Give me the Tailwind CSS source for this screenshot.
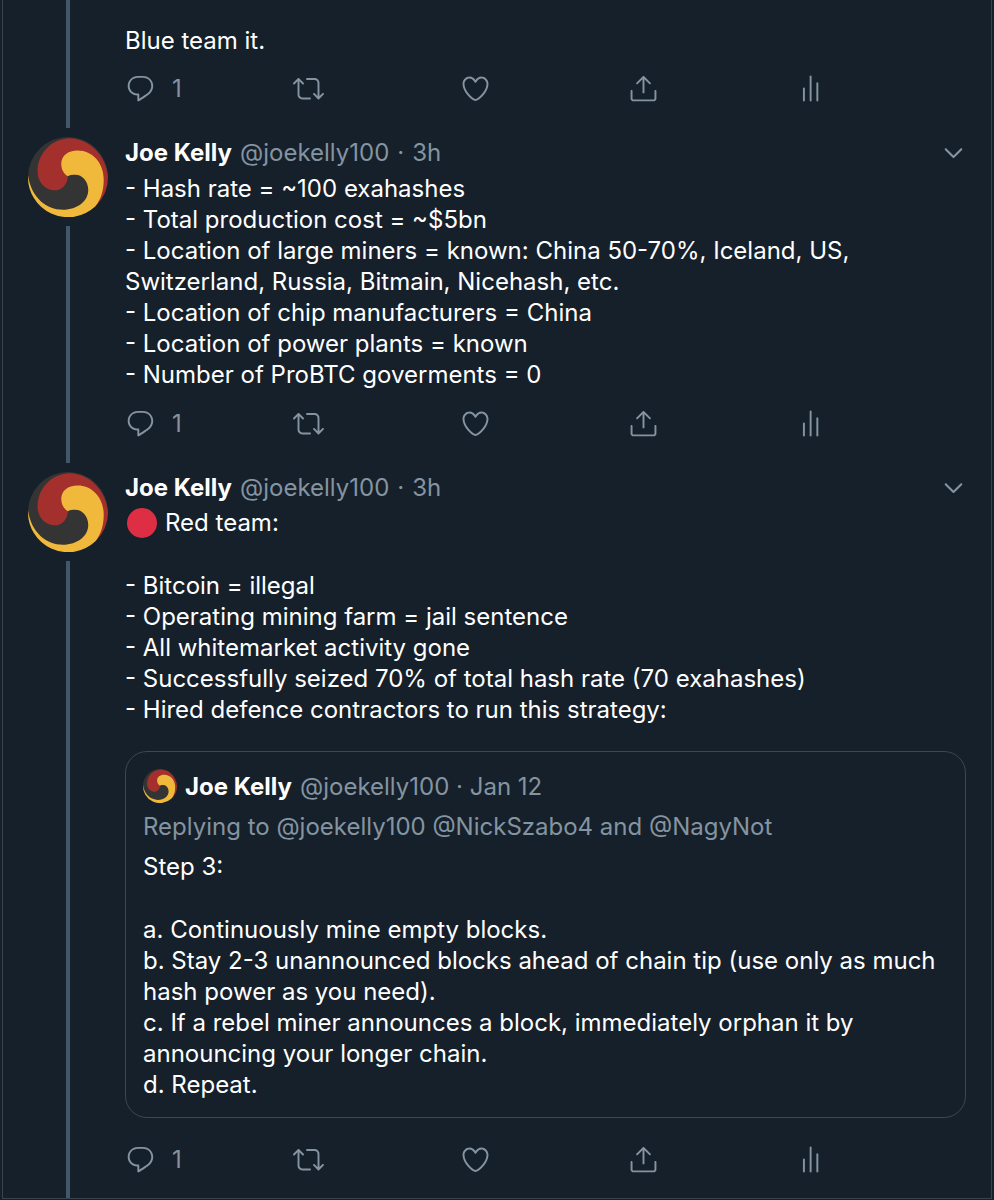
<!DOCTYPE html>
<html lang="en">

<head>
    <meta charset="UTF-8">
    <meta name="viewport" content="width=device-width, initial-scale=1.0">
    <title>Joe Kelly - Thread</title>
    <script src="https://cdn.jsdelivr.net/npm/@tailwindcss/browser@4"></script>
</head>

<body class="bg-[#16202a] text-white font-['Inter',sans-serif] text-[24px] leading-[31px]">
    <!-- Shared icons -->
    <svg class="hidden" aria-hidden="true">
        <symbol id="reply" viewBox="0 0 24 24">
            <path d="M14.046 2.242l-4.148-.01h-.002c-4.374 0-7.8 3.427-7.8 7.802 0 4.098 3.186 7.206 7.465 7.37v3.828c0 .108.044.286.12.403.142.225.384.347.632.347.138 0 .277-.038.402-.118.264-.168 6.473-4.14 8.088-5.506 1.902-1.61 3.04-3.97 3.043-6.312v-.017c-.006-4.367-3.43-7.787-7.8-7.788zm3.787 12.972c-1.134.96-4.862 3.405-6.772 4.643V16.67c0-.414-.335-.75-.75-.75h-.396c-3.66 0-6.318-2.476-6.318-5.886 0-3.534 2.768-6.302 6.3-6.302l4.147.01h.002c3.532 0 6.3 2.766 6.302 6.296-.003 1.91-.942 3.844-2.514 5.176z" />
        </symbol>
        <symbol id="retweet" viewBox="0 0 24 24">
            <path d="M23.77 15.67c-.292-.293-.767-.293-1.06 0l-2.22 2.22V7.65c0-2.068-1.683-3.75-3.75-3.75h-5.85c-.414 0-.75.336-.75.75s.336.75.75.75h5.85c1.24 0 2.25 1.01 2.25 2.25v10.24l-2.22-2.22c-.293-.293-.768-.293-1.06 0s-.294.768 0 1.06l3.5 3.5c.145.147.337.22.53.22s.383-.072.53-.22l3.5-3.5c.294-.292.294-.767 0-1.06zm-10.66 3.28H7.26c-1.24 0-2.25-1.01-2.25-2.25V6.46l2.22 2.22c.148.147.34.22.532.22s.384-.073.53-.22c.293-.293.293-.768 0-1.06l-3.5-3.5c-.293-.294-.768-.294-1.06 0l-3.5 3.5c-.294.292-.294.767 0 1.06s.767.293 1.06 0l2.22-2.22V16.7c0 2.068 1.683 3.75 3.75 3.75h5.85c.414 0 .75-.336.75-.75s-.337-.75-.75-.75z" />
        </symbol>
        <symbol id="like" viewBox="0 0 24 24">
            <path d="M12 21.638h-.014C9.403 21.59 1.95 14.856 1.95 8.478c0-3.064 2.525-5.754 5.403-5.754 2.29 0 3.83 1.58 4.646 2.73.814-1.148 2.354-2.73 4.645-2.73 2.88 0 5.404 2.69 5.404 5.755 0 6.376-7.454 13.11-10.037 13.157H12zM7.354 4.225c-2.08 0-3.903 1.988-3.903 4.255 0 5.74 7.034 11.596 8.55 11.658 1.518-.062 8.55-5.917 8.55-11.658 0-2.267-1.823-4.255-3.903-4.255-2.528 0-3.94 2.936-3.952 2.965-.23.562-1.156.562-1.387 0-.014-.03-1.425-2.965-3.954-2.965z" />
        </symbol>
        <symbol id="share" viewBox="0 0 24 24">
            <path d="M17.53 7.47l-5-5c-.293-.293-.768-.293-1.06 0l-5 5c-.294.293-.294.768 0 1.06s.767.294 1.06 0l3.72-3.72V15c0 .414.336.75.75.75s.75-.336.75-.75V4.81l3.72 3.72c.146.147.338.22.53.22s.384-.072.53-.22c.293-.293.293-.767 0-1.06z" />
            <path d="M19.708 21.944H4.292C3.028 21.944 2 20.916 2 19.652V14c0-.414.336-.75.75-.75s.75.336.75.75v5.652c0 .437.355.792.792.792h15.416c.437 0 .792-.355.792-.792V14c0-.414.336-.75.75-.75s.75.336.75.75v5.652c0 1.264-1.028 2.292-2.292 2.292z" />
        </symbol>
        <symbol id="stats" viewBox="0 0 24 24">
            <path d="M6.9 11.9v9.4M12.1 2.7v18.6M17.3 7.9v13.4" fill="none" stroke="currentColor" stroke-width="1.5" stroke-linecap="round" />
        </symbol>
        <symbol id="chevron" viewBox="0 0 24 24">
            <path d="M20.207 8.147c-.39-.39-1.023-.39-1.414 0L12 14.94 5.207 8.147c-.39-.39-1.023-.39-1.414 0-.39.39-.39 1.023 0 1.414l7.5 7.5c.195.196.45.294.707.294s.512-.098.707-.293l7.5-7.5c.39-.39.39-1.022 0-1.413z" />
        </symbol>
        <symbol id="avatar" viewBox="84 51 243 243">
            <circle cx="205.5" cy="172.5" r="121.5" fill="#343434" />
            <path d="M113 155C113 108 148 57 212 55C270 57 320 105 327 172A121.500 121.500 0 0 1 290 260L300 150L215 150L205 170C204 195 188 213 165 213C137 213 113 190 113 155Z" fill="#a3302c" />
            <path d="M205 170C192 163 185 148 185 133C185 108 205 92 235 92C280 92 314 130 314 180C314 215 305 242 288 262A121.500 121.500 0 0 1 84 168C94 235 140 272 190 272C235 272 267 245 267 212C267 185 248 166 228 166C218 166 210 167 205 170Z" fill="#f0b93b" />
        </symbol>
    </svg>

    <main class="ml-[2px] mr-[2px] border-x border-b border-[#38444d]">
        <!-- Tweet -->
        <article class="flex gap-[17px] px-[25px]">
            <div class="flex w-20 shrink-0 flex-col items-center pb-[9px]">
                <div class="w-1 flex-1 bg-[#425769]"></div>
            </div>
            <div class="min-w-0 flex-1 pt-[25px] pb-[33px]">
                <p>Blue team it.</p>
                <div class="mt-[17px] mr-[3px] grid grid-cols-5 text-[#8494a1]">
                    <button class="flex items-center gap-4" aria-label="Reply"><svg class="size-[31px] fill-current"><use href="#reply" /></svg>1</button>
                    <button class="flex items-center" aria-label="Retweet"><svg class="size-[31px] fill-current"><use href="#retweet" /></svg></button>
                    <button class="flex items-center" aria-label="Like"><svg class="size-[31px] fill-current"><use href="#like" /></svg></button>
                    <button class="flex items-center" aria-label="Share"><svg class="size-[31px] fill-current"><use href="#share" /></svg></button>
                    <button class="flex items-center" aria-label="Analytics"><svg class="size-[31px] fill-current"><use href="#stats" /></svg></button>
                </div>
            </div>
        </article>

        <!-- Tweet -->
        <article class="flex gap-[17px] px-[25px]">
            <div class="flex w-20 shrink-0 flex-col items-center gap-[9px] pb-[9px]">
                <svg class="size-20"><use href="#avatar" /></svg>
                <div class="w-1 flex-1 bg-[#425769]"></div>
            </div>
            <div class="min-w-0 flex-1 pb-[33px]">
                <header class="flex items-center gap-2 text-[#8494a1]">
                    <a href="#" class="font-bold text-white">Joe Kelly</a>
                    <span>@joekelly100</span>
                    <span>·</span>
                    <a href="#">3h</a>
                    <button class="ml-auto" aria-label="More"><svg class="size-[25px] fill-current"><use href="#chevron" /></svg></button>
                </header>
                <p class="mt-[5px]">
                    - Hash rate = ~100 exahashes<br>
                    - Total production cost = ~$5bn<br>
                    - Location of large miners = known: China 50-70%, Iceland, US, Switzerland, Russia, Bitmain, Nicehash, etc.<br>
                    - Location of chip manufacturers = China<br>
                    - Location of power plants = known<br>
                    - Number of ProBTC goverments = 0
                </p>
                <div class="mt-[18px] mr-[3px] grid grid-cols-5 text-[#8494a1]">
                    <button class="flex items-center gap-4" aria-label="Reply"><svg class="size-[31px] fill-current"><use href="#reply" /></svg>1</button>
                    <button class="flex items-center" aria-label="Retweet"><svg class="size-[31px] fill-current"><use href="#retweet" /></svg></button>
                    <button class="flex items-center" aria-label="Like"><svg class="size-[31px] fill-current"><use href="#like" /></svg></button>
                    <button class="flex items-center" aria-label="Share"><svg class="size-[31px] fill-current"><use href="#share" /></svg></button>
                    <button class="flex items-center" aria-label="Analytics"><svg class="size-[31px] fill-current"><use href="#stats" /></svg></button>
                </div>
            </div>
        </article>

        <!-- Tweet with quote -->
        <article class="flex gap-[17px] px-[25px]">
            <div class="flex w-20 shrink-0 flex-col items-center gap-[9px]">
                <svg class="size-20"><use href="#avatar" /></svg>
                <div class="w-1 flex-1 bg-[#425769]"></div>
            </div>
            <div class="min-w-0 flex-1 pb-[23px]">
                <header class="flex items-center gap-2 text-[#8494a1]">
                    <a href="#" class="font-bold text-white">Joe Kelly</a>
                    <span>@joekelly100</span>
                    <span>·</span>
                    <a href="#">3h</a>
                    <button class="ml-auto" aria-label="More"><svg class="size-[25px] fill-current"><use href="#chevron" /></svg></button>
                </header>
                <div class="mt-1">
                    <p class="flex items-center gap-2"><span class="ml-[2px] size-[30px] rounded-full bg-[#de2e43]"></span>Red team:</p>
                    <p class="mt-8">
                        - Bitcoin = illegal<br>
                        - Operating mining farm = jail sentence<br>
                        - All whitemarket activity gone<br>
                        - Successfully seized 70% of total hash rate (70 exahashes)<br>
                        - Hired defence contractors to run this strategy:
                    </p>
                </div>

                <section class="mt-[26px] rounded-[22px] border border-[#3b4751] px-[17px] pt-[17px] pb-[17px]">
                    <header class="flex items-center gap-2 text-[#8494a1]">
                        <svg class="size-[34px]"><use href="#avatar" /></svg>
                        <a href="#" class="font-bold text-white">Joe Kelly</a>
                        <span>@joekelly100 · <a href="#">Jan 12</a></span>
                    </header>
                    <p class="mt-2 text-[#8494a1]">Replying to @joekelly100 @NickSzabo4 and @NagyNot</p>
                    <p class="mt-[9px]">Step 3:</p>
                    <p class="mt-8">
                        a. Continuously mine empty blocks.<br>
                        b. Stay 2-3 unannounced blocks ahead of chain tip (use only as much hash power as you need).<br>
                        c. If a rebel miner announces a block, immediately orphan it by announcing your longer chain.<br>
                        d. Repeat.
                    </p>
                </section>

                <div class="mt-[26px] mr-[3px] grid grid-cols-5 text-[#8494a1]">
                    <button class="flex items-center gap-4" aria-label="Reply"><svg class="size-[31px] fill-current"><use href="#reply" /></svg>1</button>
                    <button class="flex items-center" aria-label="Retweet"><svg class="size-[31px] fill-current"><use href="#retweet" /></svg></button>
                    <button class="flex items-center" aria-label="Like"><svg class="size-[31px] fill-current"><use href="#like" /></svg></button>
                    <button class="flex items-center" aria-label="Share"><svg class="size-[31px] fill-current"><use href="#share" /></svg></button>
                    <button class="flex items-center" aria-label="Analytics"><svg class="size-[31px] fill-current"><use href="#stats" /></svg></button>
                </div>
            </div>
        </article>
    </main>
</body>

</html>
